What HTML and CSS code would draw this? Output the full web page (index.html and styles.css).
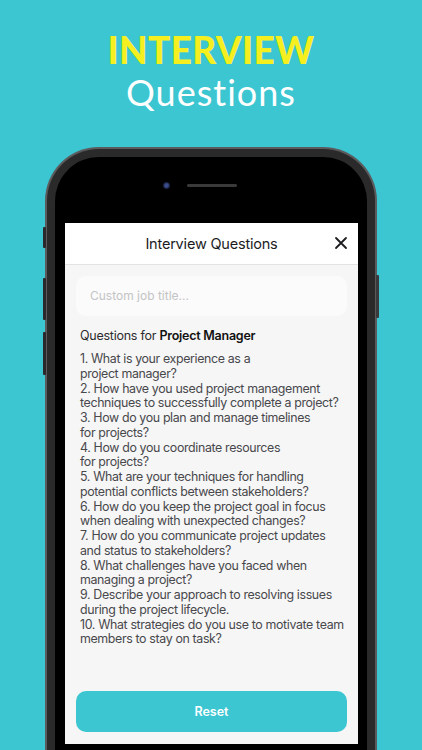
FILE: index.html
```html
<!DOCTYPE html>
<html>
<head>
<meta charset="utf-8">
<link rel="stylesheet" href="styles.css">
</head>
<body>
<div class="page">
  <div class="hero">
    <div class="hero-top">INTERVIEW</div>
    <div class="hero-sub">Questions</div>
  </div>
  <div class="phone">
    <span class="btn btn-mute"></span>
    <span class="btn btn-vol1"></span>
    <span class="btn btn-vol2"></span>
    <span class="btn btn-power"></span>
    <div class="frame">
      <div class="bezel">
        <div class="sensors">
          <span class="camera"></span>
          <span class="speaker"></span>
        </div>
        <div class="screen">
          <div class="modal-head">
            <div class="modal-title">Interview Questions</div>
            <svg class="close" width="14" height="14" viewBox="0 0 14 14"><path d="M2 2 L12 12 M12 2 L2 12" stroke="#1c1c1e" stroke-width="1.8" stroke-linecap="round" fill="none"/></svg>
          </div>
          <div class="modal-body">
            <div class="input">Custom job title...</div>
            <div class="for">Questions for <b>Project Manager</b></div>
            <div class="list">
              <div>1. What is your experience as a<br>project manager?</div>
              <div>2. How have you used project management<br>techniques to successfully complete a project?</div>
              <div>3. How do you plan and manage timelines<br>for projects?</div>
              <div>4. How do you coordinate resources<br>for projects?</div>
              <div>5. What are your techniques for handling<br>potential conflicts between stakeholders?</div>
              <div>6. How do you keep the project goal in focus<br>when dealing with unexpected changes?</div>
              <div>7. How do you communicate project updates<br>and status to stakeholders?</div>
              <div>8. What challenges have you faced when<br>managing a project?</div>
              <div>9. Describe your approach to resolving issues<br>during the project lifecycle.</div>
              <div>10. What strategies do you use to motivate team<br>members to stay on task?</div>
            </div>
            <div class="reset">Reset</div>
          </div>
        </div>
      </div>
    </div>
  </div>
</div>
</body>
</html>
```
FILE: styles.css
```css
html, body {
  margin: 0;
  padding: 0;
}
body {
  background: #3bc6d2;
  width: 422px;
  height: 750px;
  overflow: hidden;
}
.page {
  display: flex;
  flex-direction: column;
}
.hero {
  padding-top: 30px;
  text-align: center;
  font-family: Lato, "Noto Sans", sans-serif;
}
.hero-top {
  font-size: 37px;
  line-height: 40px;
  font-weight: 900;
  color: #f5ef1f;
  letter-spacing: 0.3px;
}
.hero-sub {
  margin-top: 2px;
  font-size: 36px;
  line-height: 40px;
  font-weight: 400;
  color: #ffffff;
  letter-spacing: 1px;
}
.phone {
  position: relative;
  margin: 35px 0 0 45px;
  width: 332px;
  height: 640px;
  padding: 2px;
  box-sizing: border-box;
  background: #5b5b5d;
  border-radius: 54px 54px 0 0;
}
.btn {
  position: absolute;
  width: 3px;
  background: #2a2a2c;
  border-radius: 1px;
}
.btn-mute { left: -2px; top: 80px; height: 21px; }
.btn-vol1 { left: -2px; top: 131px; height: 42px; }
.btn-vol2 { left: -2px; top: 185px; height: 43px; }
.btn-power { right: -2px; top: 128px; height: 43px; background: #3a3a3c; }
.frame {
  height: 100%;
  padding: 8px 8px 0 8px;
  box-sizing: border-box;
  background: #2a2a2b;
  border-radius: 52px 52px 0 0;
}
.bezel {
  height: 100%;
  padding: 0 9px 0 10px;
  box-sizing: border-box;
  background: #000;
  border-radius: 44px 44px 0 0;
  display: flex;
  flex-direction: column;
}
.sensors {
  height: 66px;
  display: flex;
  align-items: center;
  justify-content: center;
  gap: 17px;
  padding-right: 24px;
  box-sizing: border-box;
  padding-bottom: 10px;
}
.camera {
  width: 7px;
  height: 7px;
  border-radius: 50%;
  background: radial-gradient(circle at 50% 50%, #3a4a8a 0 30%, #141a33 70%);
}
.speaker {
  width: 50px;
  height: 3px;
  border-radius: 2px;
  background: #3a3a3a;
}
.screen {
  height: 521px;
  background: #f6f6f6;
  display: flex;
  flex-direction: column;
  font-family: Inter, "Noto Sans", sans-serif;
}
.modal-head {
  position: relative;
  height: 41px;
  background: #ffffff;
  border-bottom: 1px solid #e3e3e3;
  display: flex;
  align-items: center;
  justify-content: center;
}
.modal-title {
  font-size: 14.5px;
  color: #1c1c1e;
  letter-spacing: -0.2px;
}
.close {
  position: absolute;
  right: 10px;
  top: 13px;
}
.modal-body {
  flex: 1;
  display: flex;
  flex-direction: column;
  padding: 11px 11px 12px 11px;
}
.input {
  height: 40px;
  border-radius: 10px;
  background: #fbfbfb;
  color: #c4c4c6;
  font-size: 12px;
  line-height: 40px;
  padding-left: 14px;
}
.for {
  margin-top: 12px;
  padding-left: 4px;
  font-size: 12.5px;
  line-height: 16px;
  color: #2c2c2e;
  letter-spacing: -0.25px;
}
.for b {
  font-weight: 600;
  color: #111;
}
.list {
  margin-top: 8px;
  padding-left: 4px;
  font-size: 12.4px;
  line-height: 14.75px;
  color: #48484c;
  letter-spacing: -0.36px;
  white-space: nowrap;
}
.reset {
  margin-top: auto;
  height: 41px;
  border-radius: 10px;
  background: #3bc6d2;
  color: #fff;
  font-weight: 600;
  font-size: 12.5px;
  display: flex;
  align-items: center;
  justify-content: center;
}
```
